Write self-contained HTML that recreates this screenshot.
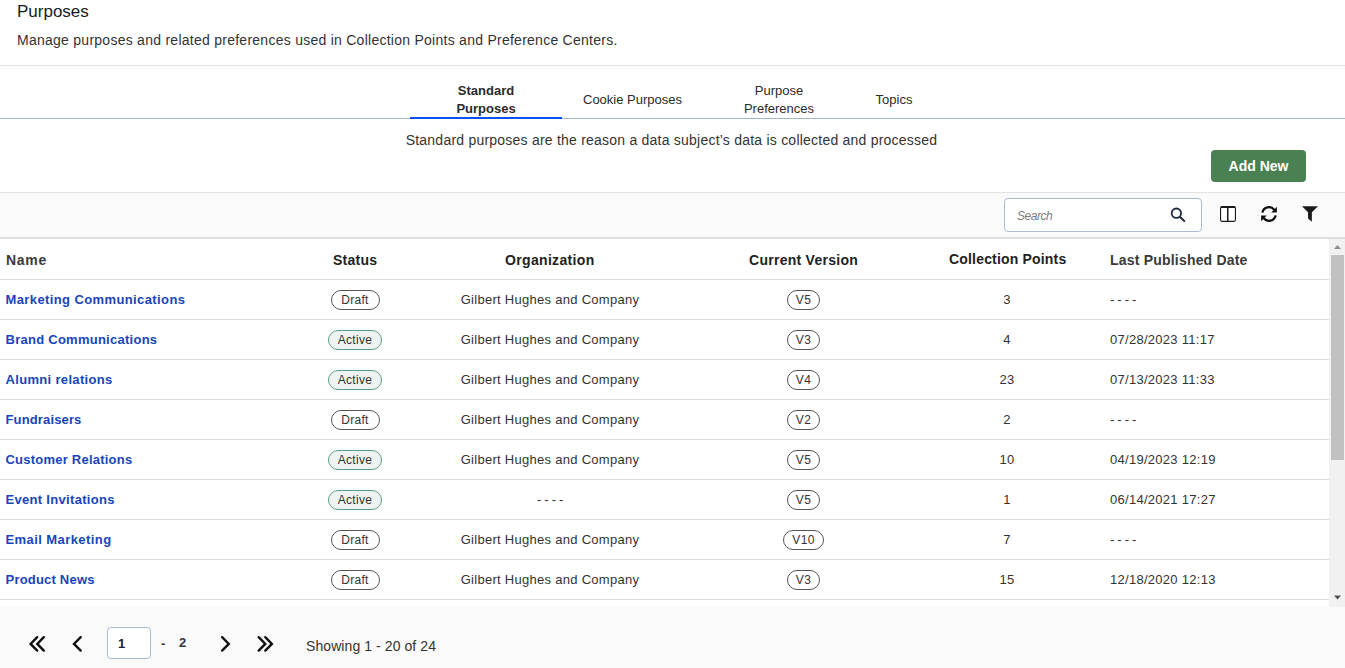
<!DOCTYPE html>
<html><head><meta charset="utf-8">
<style>
*{box-sizing:border-box;margin:0;padding:0}
html,body{width:1345px;height:668px;overflow:hidden;background:#fff;font-family:"Liberation Sans",sans-serif;color:#2b2b2b}
.a{position:absolute;white-space:nowrap}
#title{left:17px;top:2px;font-size:17px;line-height:20px;color:#1a1a1a}
#sub{left:17px;top:32px;font-size:14px;line-height:16px;color:#333;letter-spacing:0.26px}
#hr1{left:0;top:65px;width:1345px;height:1px;background:#e2e2e2}
.tab{font-size:13px;color:#2b2b2b;text-align:center;line-height:18px}
#tabline{left:0;top:118px;width:1345px;height:1px;background:#a3b5c9}
#tabul{left:410px;top:117px;width:152px;height:2px;background:#0a50f5}
#desc{left:-1px;width:1345px;text-align:center;top:132px;font-size:14px;line-height:16px;color:#333;letter-spacing:0.225px}
#addnew{left:1211px;top:150px;width:95px;height:32px;background:#498153;border-radius:4px;color:#fff;font-weight:bold;font-size:14px;text-align:center;line-height:32px}
#tb{left:0;top:192px;width:1345px;height:47px;background:#fafafa;border-top:1px solid #e3e3e3;border-bottom:2px solid #dedede}
#search{left:1004px;top:198px;width:198px;height:34px;background:#fff;border:1px solid #a8bbd3;border-radius:4px}
#sph{left:1017px;top:209px;font-size:12px;line-height:14px;letter-spacing:-0.45px;font-style:italic;color:#7a7a7a}
.th{position:absolute;top:252px;line-height:16px;font-weight:bold;font-size:14px;color:#222;white-space:nowrap}
.ln{position:absolute;left:0;width:1329px;height:1px;background:#dcdcdc}
.t13{font-size:13px;line-height:16px;color:#333;letter-spacing:0.28px}
.ctr{text-align:center}
.dash{letter-spacing:-0.3px}
.nm{left:5.5px;color:#1745bb;font-weight:bold;letter-spacing:0.26px}
.pill{height:20px;line-height:18px;border:1px solid #555;border-radius:10px;font-size:12px;text-align:center;color:#333;letter-spacing:0.3px}
.pill.act{border-color:#5a9e84;background:#eef3f1}
#sb{left:1329px;top:239px;width:16px;height:368px;background:#f1f1f1}
#thumb{left:1331px;top:255px;width:13px;height:205px;background:#c1c1c1}
#foot{left:0;top:607px;width:1345px;height:61px;background:#fafafa}
#pgbox{left:107px;top:627px;width:44px;height:32px;background:#fff;border:1px solid #a8bbd3;border-radius:4px}
#pg1{left:118px;top:636px;font-size:13px;line-height:16px;font-weight:bold;color:#222}
#pgdash{left:161px;top:636px;font-size:13px;line-height:16px;font-weight:bold;color:#333}
#pg2{left:179px;top:635px;font-size:13px;line-height:16px;font-weight:bold;color:#333}
#showing{left:306px;top:638px;font-size:14px;line-height:16px;color:#333;letter-spacing:0.08px}
</style></head><body>
<div class="a" id="title">Purposes</div>
<div class="a" id="sub">Manage purposes and related preferences used in Collection Points and Preference Centers.</div>
<div class="a" id="hr1"></div>

<div class="a tab" style="left:410px;top:82px;width:152px;font-weight:bold">Standard<br>Purposes</div>
<div class="a tab" style="left:562px;top:91px;width:141px">Cookie Purposes</div>
<div class="a tab" style="left:703px;top:82px;width:152px">Purpose<br>Preferences</div>
<div class="a tab" style="left:855px;top:91px;width:78px">Topics</div>
<div class="a" id="tabline"></div>
<div class="a" id="tabul"></div>

<div class="a" id="desc">Standard purposes are the reason a data subject’s data is collected and processed</div>
<div class="a" id="addnew">Add New</div>

<div class="a" id="tb"></div>
<div class="a" id="search"></div>
<div class="a" id="sph">Search</div>
<svg class="a" style="left:1168px;top:205px" width="20" height="20" viewBox="1168 205 20 20"><circle cx="1176.4" cy="213.2" r="4.7" fill="none" stroke="#1b2742" stroke-width="1.8"/><line x1="1179.8" y1="216.8" x2="1184.3" y2="221" stroke="#1b2742" stroke-width="1.9" stroke-linecap="round"/></svg>
<svg class="a" style="left:1220px;top:206px" width="16" height="16" viewBox="0 0 16 16"><rect x="0.55" y="0.9" width="14.9" height="14.5" rx="1.6" fill="#fff" stroke="#1a1a1a" stroke-width="1.1"/><rect x="0.6" y="0" width="14.8" height="2.1" rx="1" fill="#1a1a1a"/><rect x="7" y="1" width="1.5" height="14.4" fill="#1a1a1a"/></svg>
<svg class="a" style="left:1261px;top:206px" width="16" height="16" viewBox="0 0 16 16"><g fill="none" stroke="#111" stroke-width="2.3"><path d="M1.4,6.6 A6.6,6.6 0 0 1 13.3,4.0"/><path d="M14.6,9.4 A6.6,6.6 0 0 1 2.7,12.0"/></g><g fill="#111"><polygon points="15.9,0.8 15.9,6.4 10.3,6.4"/><polygon points="0.1,9.6 0.1,15.2 5.7,9.6"/></g></svg>
<svg class="a" style="left:1302px;top:206px" width="16" height="16" viewBox="0 0 16 16"><polygon fill="#1a1a1a" points="0,0.15 16,0.15 9.85,6.3 9.85,15.8 6.05,12.5 6.05,6.3"/></svg>

<div class="th" style="left:6px;color:#3a3a3a;letter-spacing:0.7px">Name</div>
<div class="th" style="left:333px;letter-spacing:0.27px">Status</div>
<div class="th" style="left:505px;letter-spacing:0.33px">Organization</div>
<div class="th" style="left:749px;letter-spacing:0.27px">Current Version</div>
<div class="th" style="left:949px;top:251px;letter-spacing:0.18px">Collection Points</div>
<div class="th" style="left:1110px;color:#3a3a3a;letter-spacing:0.2px">Last Published Date</div>
<div class="ln" style="top:279px"></div>
<div class="a t13 nm" style="top:292px;letter-spacing:0.39px">Marketing Communications</div>
<div class="a pill" style="top:290px;left:330.5px;width:49px">Draft</div>
<div class="a t13 ctr" style="top:292px;left:400px;width:300px">Gilbert Hughes and Company</div>
<div class="a pill" style="top:290px;left:787.0px;width:33px">V5</div>
<div class="a t13 ctr" style="top:292px;left:907px;width:200px">3</div>
<div class="a t13 dash" style="top:292px;left:1110px">- - - -</div>
<div class="ln" style="top:319px"></div>
<div class="a t13 nm" style="top:332px;letter-spacing:0.26px">Brand Communications</div>
<div class="a pill act" style="top:330px;left:328.0px;width:54px">Active</div>
<div class="a t13 ctr" style="top:332px;left:400px;width:300px">Gilbert Hughes and Company</div>
<div class="a pill" style="top:330px;left:787.0px;width:33px">V3</div>
<div class="a t13 ctr" style="top:332px;left:907px;width:200px">4</div>
<div class="a t13" style="top:332px;left:1110px">07/28/2023 11:17</div>
<div class="ln" style="top:359px"></div>
<div class="a t13 nm" style="top:372px;letter-spacing:0.33px">Alumni relations</div>
<div class="a pill act" style="top:370px;left:328.0px;width:54px">Active</div>
<div class="a t13 ctr" style="top:372px;left:400px;width:300px">Gilbert Hughes and Company</div>
<div class="a pill" style="top:370px;left:787.0px;width:33px">V4</div>
<div class="a t13 ctr" style="top:372px;left:907px;width:200px">23</div>
<div class="a t13" style="top:372px;left:1110px">07/13/2023 11:33</div>
<div class="ln" style="top:399px"></div>
<div class="a t13 nm" style="top:412px;letter-spacing:0.14px">Fundraisers</div>
<div class="a pill" style="top:410px;left:330.5px;width:49px">Draft</div>
<div class="a t13 ctr" style="top:412px;left:400px;width:300px">Gilbert Hughes and Company</div>
<div class="a pill" style="top:410px;left:787.0px;width:33px">V2</div>
<div class="a t13 ctr" style="top:412px;left:907px;width:200px">2</div>
<div class="a t13 dash" style="top:412px;left:1110px">- - - -</div>
<div class="ln" style="top:439px"></div>
<div class="a t13 nm" style="top:452px;letter-spacing:0.225px">Customer Relations</div>
<div class="a pill act" style="top:450px;left:328.0px;width:54px">Active</div>
<div class="a t13 ctr" style="top:452px;left:400px;width:300px">Gilbert Hughes and Company</div>
<div class="a pill" style="top:450px;left:787.0px;width:33px">V5</div>
<div class="a t13 ctr" style="top:452px;left:907px;width:200px">10</div>
<div class="a t13" style="top:452px;left:1110px">04/19/2023 12:19</div>
<div class="ln" style="top:479px"></div>
<div class="a t13 nm" style="top:492px;letter-spacing:0.31px">Event Invitations</div>
<div class="a pill act" style="top:490px;left:328.0px;width:54px">Active</div>
<div class="a t13 ctr dash" style="top:492px;left:400px;width:300px">- - - -</div>
<div class="a pill" style="top:490px;left:787.0px;width:33px">V5</div>
<div class="a t13 ctr" style="top:492px;left:907px;width:200px">1</div>
<div class="a t13" style="top:492px;left:1110px">06/14/2021 17:27</div>
<div class="ln" style="top:519px"></div>
<div class="a t13 nm" style="top:532px;letter-spacing:0.42px">Email Marketing</div>
<div class="a pill" style="top:530px;left:330.5px;width:49px">Draft</div>
<div class="a t13 ctr" style="top:532px;left:400px;width:300px">Gilbert Hughes and Company</div>
<div class="a pill" style="top:530px;left:783.0px;width:41px">V10</div>
<div class="a t13 ctr" style="top:532px;left:907px;width:200px">7</div>
<div class="a t13 dash" style="top:532px;left:1110px">- - - -</div>
<div class="ln" style="top:559px"></div>
<div class="a t13 nm" style="top:572px;letter-spacing:0.205px">Product News</div>
<div class="a pill" style="top:570px;left:330.5px;width:49px">Draft</div>
<div class="a t13 ctr" style="top:572px;left:400px;width:300px">Gilbert Hughes and Company</div>
<div class="a pill" style="top:570px;left:787.0px;width:33px">V3</div>
<div class="a t13 ctr" style="top:572px;left:907px;width:200px">15</div>
<div class="a t13" style="top:572px;left:1110px">12/18/2020 12:13</div>
<div class="ln" style="top:599px"></div>

<div class="a" id="sb"></div>
<div class="a" id="thumb"></div>
<div class="a" id="foot"></div>
<svg class="a" style="left:0;top:606px" width="300" height="62" viewBox="0 606 300 62">
<g fill="none" stroke="#111" stroke-width="2.4" stroke-linecap="round" stroke-linejoin="miter">
<polyline points="37.2,637.2 30.6,643.9 37.2,650.6"/>
<polyline points="43.8,637.2 37.3,643.9 43.8,650.6"/>
<polyline points="80.7,637.2 74,643.9 80.7,650.6"/>
<polyline points="222.1,637.2 228.8,643.9 222.1,650.6"/>
<polyline points="258.7,637.2 265.3,643.9 258.7,650.6"/>
<polyline points="265.3,637.2 271.9,643.9 265.3,650.6"/>
</g></svg>
<div class="a" id="pgbox"></div>
<div class="a" id="pg1">1</div>
<div class="a" id="pgdash">-</div>
<div class="a" id="pg2">2</div>
<div class="a" id="showing">Showing 1 - 20 of 24</div>
<svg class="a" style="left:1329px;top:239px" width="16" height="367" viewBox="1329 239 16 367"><polygon points="1334,249 1337.5,245 1341,249" fill="#8d8d8d"/><polygon points="1334,595.5 1337.5,599.5 1341,595.5" fill="#505050"/></svg>
</body></html>
